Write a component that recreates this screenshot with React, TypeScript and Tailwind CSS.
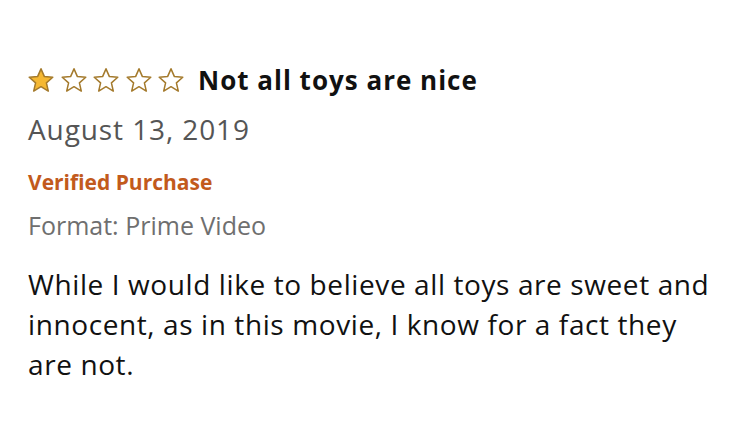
import React from "react";

const Star = ({ filled }: { filled: boolean }) => (
  <svg viewBox="1.3 1.3 21.4 20.4" className="h-[24px] w-[26px]">
    <path
      d="M12 2l2.9 6.6 7.1.6-5.4 4.7 1.6 7-6.2-3.7-6.2 3.7 1.6-7L2 9.2l7.1-.6z"
      fill={filled ? "#f5b833" : "#ffffff"}
      stroke="#a47a2c"
      strokeWidth="1.3"
      strokeLinejoin="round"
    />
  </svg>
);

export default function App() {
  return (
    <div
      className="h-[437px] w-[750px] bg-white pl-[28px] pt-[65px]"
      style={{ fontFamily: "'Open Sans', sans-serif" }}>
      <div className="flex items-center">
        <div className="flex gap-[6.5px]">
          {[0, 1, 2, 3, 4].map((i) => (
            <Star key={i} filled={i === 0} />
          ))}
        </div>
        <h2 className="ml-[14px] text-[26px] font-bold leading-[30px] tracking-[1px] text-[#111111]">
          Not all toys are nice
        </h2>
      </div>
      <p className="mt-[18px] text-[28px] leading-[32px] tracking-[0.9px] text-[#555555]">
        August 13, 2019
      </p>
      <p className="mt-[25px] text-[21px] font-bold leading-[24px] text-[#c25a1c]">
        Verified Purchase
      </p>
      <p className="mt-[17px] text-[25px] leading-[28px] text-[#6f6f6f]">
        Format: Prime Video
      </p>
      <p className="mt-[25px] w-[700px] text-[28px] leading-[40px] tracking-[0.6px] text-[#111111]">
        While I would like to believe all toys are sweet and innocent, as in
        this movie, I know for a fact they are not.
      </p>
    </div>
  );
}
